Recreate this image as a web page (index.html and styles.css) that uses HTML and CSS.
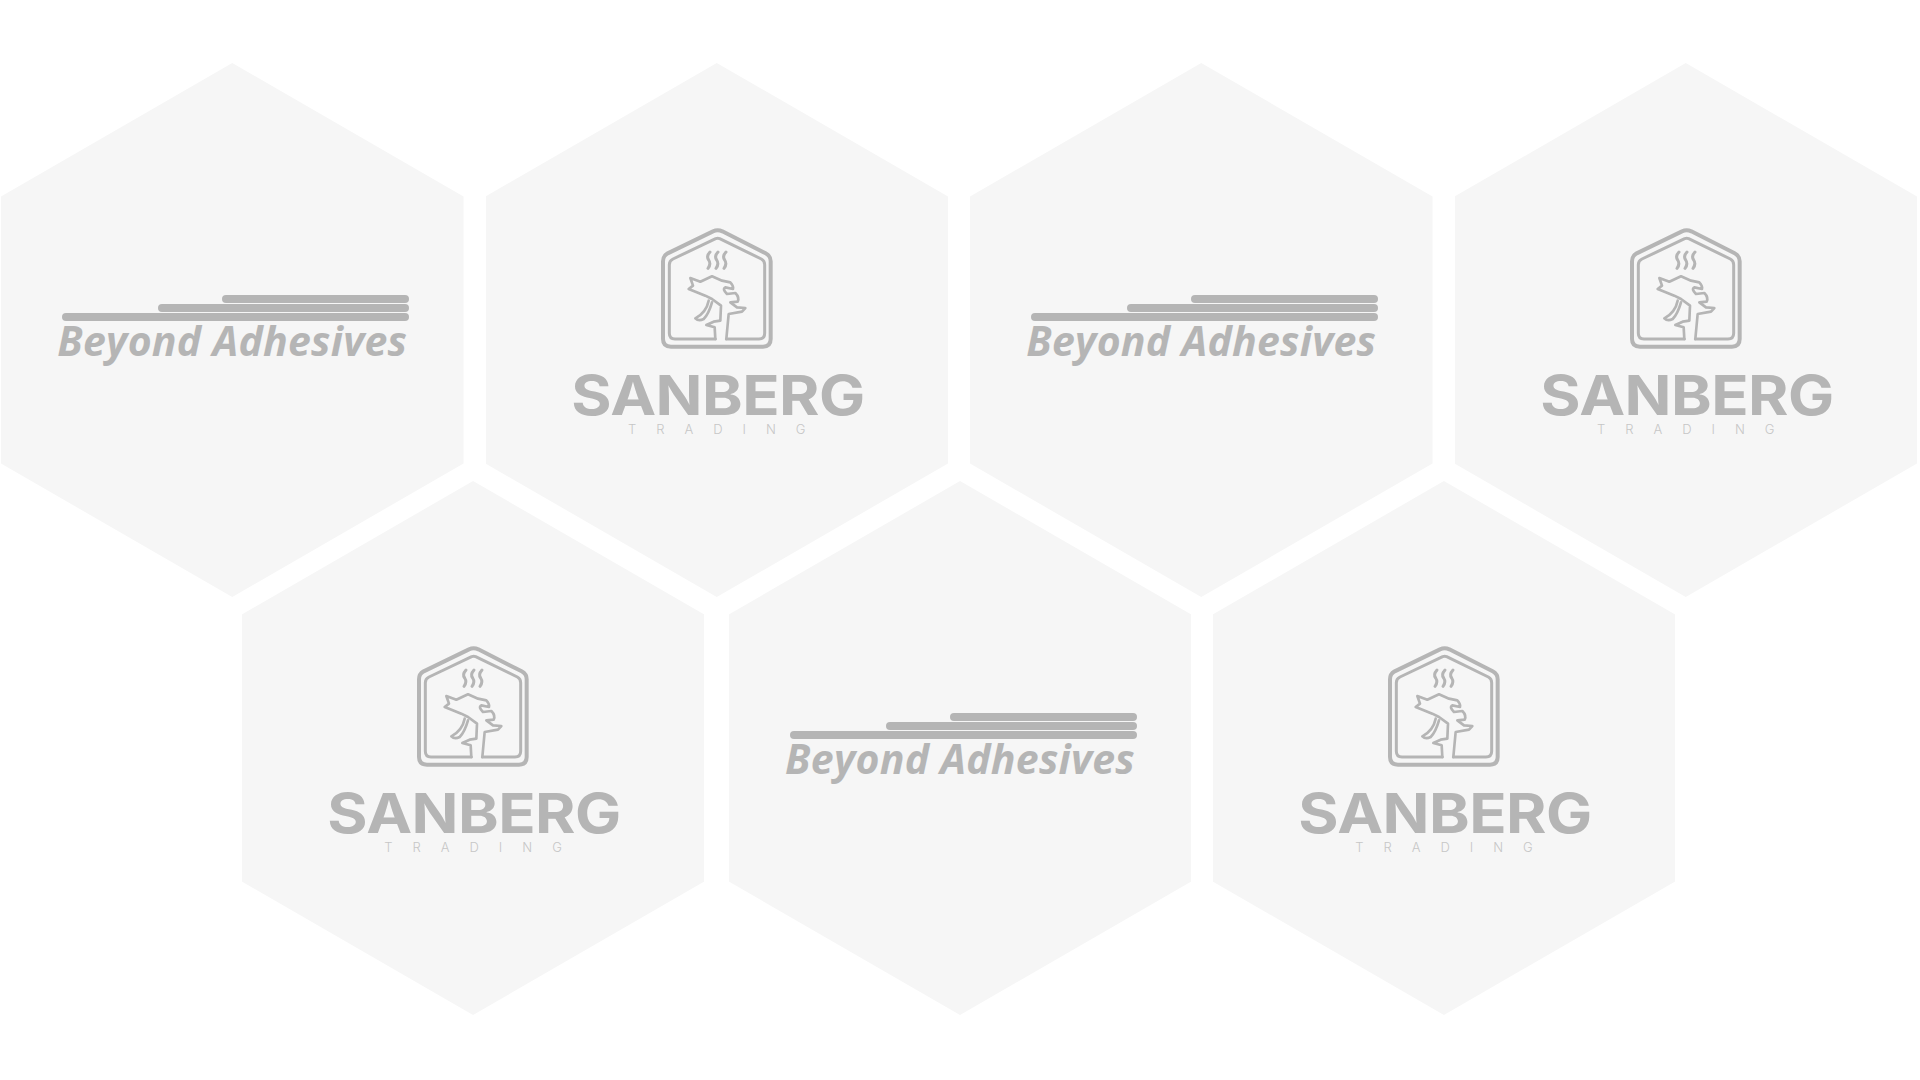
FILE: index.html
```html
<!DOCTYPE html>
<html lang="en">
<head>
<meta charset="utf-8">
<title>Partners</title>
<link rel="stylesheet" href="styles.css">
</head>
<body>
<svg class="defs" width="0" height="0" aria-hidden="true">
  <symbol id="house" viewBox="50 40 360 378">
    <g fill="none" stroke="currentColor" stroke-linecap="round" stroke-linejoin="round">
      <path stroke-width="12" d="M218 62 Q232 56 246 62 L376 128 Q391 136 391 152 V385 Q391 408 368 408 H92 Q68 408 68 385 V152 Q68 136 82 128 Z"/>
      <path stroke-width="9" d="M225 385 H104 Q87 385 87 368 V162 Q87 150 98 145 L226 84 Q232 82 238 84 L363 145 Q373 150 373 162 V368 Q373 385 356 385 H258"/>
      <path stroke-width="8" d="M225 385 L223 350 L198 343 L220 333 L240 330 L242 285 L215 265 L195 255 L145 235 L158 225 L150 202 L180 213 L215 197 L245 210 L270 215 Q280 225 278 235 L255 230 Q245 235 260 250 L285 247 Q298 260 292 273 L270 275 L290 290 L315 292 L305 303 L265 310 L258 385"/>
      <path stroke-width="8" d="M205 270 Q198 305 165 323 Q175 333 190 325 Q205 310 215 275"/>
      <path stroke-width="9" d="M209 124 Q197 137 205 148 Q213 160 203 173"/>
      <path stroke-width="9" d="M233 124 Q221 137 229 148 Q237 160 227 173"/>
      <path stroke-width="9" d="M257 124 Q245 137 253 148 Q261 160 251 173"/>
    </g>
  </symbol>
</svg>
<main class="honeycomb">
  <section class="row row-top">
    <article class="hex"><div class="beyond"><div class="bars"><span class="bar bar-short"></span><span class="bar bar-mid"></span><span class="bar bar-long"></span></div><p class="beyond-name">Beyond Adhesives</p></div></article>
    <article class="hex"><div class="sanberg"><svg class="house"><use href="#house"/></svg><p class="sanberg-name">SANBERG</p><p class="sanberg-sub">TRADING</p></div></article>
    <article class="hex"><div class="beyond"><div class="bars"><span class="bar bar-short"></span><span class="bar bar-mid"></span><span class="bar bar-long"></span></div><p class="beyond-name">Beyond Adhesives</p></div></article>
    <article class="hex"><div class="sanberg"><svg class="house"><use href="#house"/></svg><p class="sanberg-name">SANBERG</p><p class="sanberg-sub">TRADING</p></div></article>
  </section>
  <section class="row row-bottom">
    <article class="hex"><div class="sanberg"><svg class="house"><use href="#house"/></svg><p class="sanberg-name">SANBERG</p><p class="sanberg-sub">TRADING</p></div></article>
    <article class="hex hex-shifted"><div class="beyond"><div class="bars"><span class="bar bar-short"></span><span class="bar bar-mid"></span><span class="bar bar-long"></span></div><p class="beyond-name">Beyond Adhesives</p></div></article>
    <article class="hex"><div class="sanberg"><svg class="house"><use href="#house"/></svg><p class="sanberg-name">SANBERG</p><p class="sanberg-sub">TRADING</p></div></article>
  </section>
</main>
</body>
</html>
```
FILE: styles.css
```css
html, body { margin: 0; background: #fff; }
body { height: 1080px; overflow: hidden; }
.defs { position: absolute; }
.honeycomb { padding-top: 63px; display: flex; flex-direction: column; }
.row { display: flex; gap: 22px; }
.row-top { padding-left: 1px; }
.row-bottom { padding-left: 241.8px; margin-top: -116px; gap: 21.4px; }
.hex {
  flex: 0 0 462.5px;
  height: 534px;
  background: #f6f6f6;
  clip-path: polygon(50% 0, 100% 25%, 100% 75%, 50% 100%, 0 75%, 0 25%);
  display: flex;
  align-items: center;
  justify-content: center;
  color: #b5b5b5;
}
.hex-shifted { margin-left: 3.1px; }
p { margin: 0; }
.sanberg { display: flex; flex-direction: column; align-items: center; padding-bottom: 4px; }
.house { width: 120px; height: 126px; display: block; margin-top: 1px; }
.sanberg-name {
  font: 700 55px/40px Inter, sans-serif;
  margin-top: 25px;
  margin-left: 2px;
  letter-spacing: -0.5px;
  white-space: nowrap;
  transform: scaleX(1.12);
}
.sanberg-sub {
  font: 300 13px/10px Inter, sans-serif;
  letter-spacing: 20px;
  margin: 9px -20px 0 0;
  color: #c6c6c6;
}
.beyond { display: flex; flex-direction: column; align-items: center; }
.bars { width: 347px; display: flex; flex-direction: column; align-items: flex-end; gap: 1.5px; margin-left: 6px; }
.bar { display: block; height: 7.5px; border-radius: 4px; background: #b5b5b5; }
.bar-short { width: 187px; }
.bar-mid { width: 251px; }
.bar-long { width: 347px; }
.beyond-name {
  font: italic 700 41px/44px "Open Sans", sans-serif;
  letter-spacing: 0.25px;
  white-space: nowrap;
  margin: -3px 0 3px;
}
```
